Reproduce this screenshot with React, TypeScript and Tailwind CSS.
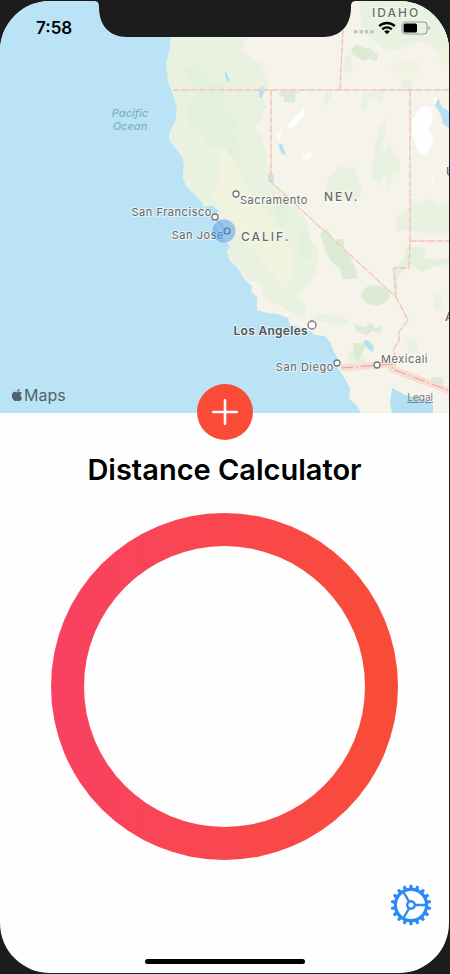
import { FaApple } from "react-icons/fa";

type Label = {
  text: string;
  x: number;
  y: number;
  className: string;
  anchor?: "start" | "middle" | "end";
};

const city = "fill-[#666664] text-[11px] font-normal tracking-wider";
const region = "fill-[#6a6a68] text-[12px] font-medium tracking-[2px]";
const ocean = "fill-[#7fb0c6] text-[11px] font-medium italic tracking-normal";

const labels: Label[] = [
  { text: "Pacific", x: 130, y: 117, className: ocean, anchor: "middle" },
  { text: "Ocean", x: 130, y: 130, className: ocean, anchor: "middle" },
  { text: "IDAHO", x: 372, y: 17, className: region },
  { text: "NEV.", x: 324, y: 201, className: region },
  { text: "CALIF.", x: 241, y: 241, className: region },
  { text: "Sacramento", x: 240, y: 204, className: city },
  { text: "San Francisco", x: 212, y: 216, className: city, anchor: "end" },
  { text: "San Jose", x: 224, y: 239, className: city, anchor: "end" },
  {
    text: "Los Angeles",
    x: 308,
    y: 335,
    className: "fill-[#555553] text-[12px] font-semibold tracking-wide",
    anchor: "end",
  },
  { text: "San Diego", x: 334, y: 371, className: city, anchor: "end" },
  { text: "Mexicali", x: 381, y: 363, className: city },
  { text: "U", x: 446, y: 176, className: region },
  { text: "A", x: 445, y: 321, className: region },
];

const towns = [
  { x: 236, y: 194, r: 3 },
  { x: 215, y: 217, r: 3 },
  { x: 312, y: 325, r: 4 },
  { x: 337, y: 363, r: 3 },
  { x: 377, y: 365, r: 3 },
];

const borders =
  "M173 90H449M343 30L340 90M271 90V182L396 297L394 268H409L410 241V90M410 241H449M396 297L408 320L399 332V341L393 350L398 362";

function MapView() {
  return (
    <section aria-label="Map" className="relative bg-[#bae3f5]">
      <svg viewBox="0 1 449 412" className="block w-full" role="img" aria-label="California and Nevada">
        <path
          fill="#f6f4ea"
          d="M176 0L174 37L169 52L166 64L169 71L168 82L173 89L173 96L177 106L176 120L170 132L169 139L175 148L182 156L184 165L183 178L187 187L195 194L203 203L203 208L209 212L213 217L217 226L222 236L229 242L230 247L227 252L230 261L238 268L245 280L252 286L251 291L257 297L257 310L267 313L278 314L288 318L290 325L300 327L312 332L315 335L325 336L330 342L334 352L337 357L338 368L345 379L350 388L349 398L357 406L361 413L450 413V0Z"
        />
        <g fill="#e9f2e1">
          <path d="M174 0H225V37L246 38L243 50L249 56L261 64L268 78L268 88L262 96L267 107L260 121L255 125L262 138L267 152L265 162L272 170L274 184L284 190L292 203L306 219L311 239L318 251L316 275L306 287L297 295L308 309L303 314L290 312L282 307L272 302L263 296L263 289L257 281L250 281L240 268L230 261L227 252L230 247L222 236L213 217L203 208L203 203L187 187L183 178L184 165L182 156L169 139L170 132L176 120L177 106L168 82L166 64L169 52Z" />
          <path d="M359 0H449V60L441 58L432 45L418 41L400 49L388 52L374 42L362 29Z" />
          <path d="M345 57L351 53L353 70L347 74L343 69ZM401 79H412V90H402ZM326 92H334L329 100L325 108L323 102ZM363 94L372 90H386L381 101L369 98L366 110L361 108Z" />
          <path d="M328 177L336 171L342 164L345 170L349 168L354 166L359 181L363 191L355 204L350 196L344 202L338 192L332 203L325 190ZM374 150L380 125L386 118L386 132L382 145L384 150L390 142L394 155L400 161L399 177L394 172L388 190L385 175L379 186L371 177Z" />
          <path d="M396 218L407 210L412 199L420 206L430 199L440 205L449 201V233H419L408 230L396 232ZM290 313L303 312L308 319L319 313L342 317L350 320L348 325L333 324L312 320ZM433 293L441 294L443 309L435 311ZM406 339L416 341L418 353L408 354Z" />
          <path d="M346 353L356 350L368 363L350 365Z" />
        </g>
        <g fill="#e2f0dc">
          <path d="M184 71L196 64L202 69L211 83L224 84V108L237 118L232 134L245 153L234 160L222 145L208 147L201 131L189 126L186 105L197 99L193 82Z" />
          <path d="M274 206L287 203L290 216L282 226L275 220ZM298 232L307 230L312 250L309 260L300 257Z" />
          <path d="M392 267L399 265L406 255L404 248L416 247L425 249V258L439 260L449 257V264L435 266L422 272L409 263L398 277V291L394 295Z" />
        </g>
        <g fill="#dcebd3">
          <path d="M351 49L357 44L364 48L370 48L378 55L377 61L369 59L363 61L352 54ZM279 91H300L295 95V102H284V97L279 95Z" />
          <path d="M320 233L328 229L333 239H344V250L349 255L357 271L357 279H342L340 269L330 260L325 250Z" />
          <path d="M362 291L369 285L382 287L389 290L389 299L379 306L367 304L361 298Z" />
          <path d="M354 324L365 327L371 323L375 328L382 325L380 333L372 331L366 335L356 331ZM353 343H367L362 354L358 363L353 353ZM431 377H443V386H433Z" />
        </g>
        <g fill="#f2f3df">
          <path d="M219 151L224 147L233 161L240 176L250 192L262 207L272 219L280 232L293 251L295 266L287 289L270 271L254 251L238 235L231 223L222 207L212 198L214 188L220 180Z" />
          <path d="M392 63L402 60L421 62L422 72L407 78L391 70ZM431 62L449 47V65ZM442 95L449 99V108L443 106Z" />
        </g>
        <g fill="#fefefe">
          <path d="M304 108L305 115L293 127L288 128L290 122ZM283 130L278 142L277 136ZM303 155L311 152L312 156L307 160L303 158ZM412 120L422 106L431 107L433 121L428 130L434 139L427 155L419 154L412 134ZM433 98H439L435 105ZM431 180L434 179L432 187Z" />
        </g>
        <g fill="#b5dff3">
          <path d="M435 105L438 98L442 107L449 111V128L443 124L441 115ZM259 89L263 86L264 92L262 98L259 97ZM278 145L282 144L286 155L282 154ZM268 175L273 174L274 181L269 183ZM225 71L230 80L228 82L225 77ZM363 341L367 340L374 346L373 352L368 349Z" />
          <path d="M392 413L390 403L392 388L398 391L405 395L415 397L425 400L433 405V413ZM203 207L212 206L219 211L216 214L222 225L228 230L225 232L216 222L213 215Z" />
        </g>
        <path d={borders} fill="none" stroke="#f6dad2" strokeWidth="1.4" />
        <path d={borders} fill="none" stroke="#f0bdb6" strokeWidth="1" strokeDasharray="6 3" />
        <path d="M341 368L393 364L392 369L450 391" fill="none" stroke="#f7ddd4" strokeWidth="7" />
        <path d="M341 368L393 364L392 369L450 391" fill="none" stroke="#e5a198" strokeWidth="1" strokeDasharray="12 3 2 3" />
        <g fill="#fff" stroke="#777" strokeWidth="1.3">
          {towns.map((t) => (
            <circle key={t.x} cx={t.x} cy={t.y} r={t.r} />
          ))}
        </g>
        <g className="font-['Inter',sans-serif]" stroke="#fff" strokeOpacity="0.6" strokeWidth="2" paintOrder="stroke" strokeLinejoin="round">
          {labels.map((l) => (
            <text
              key={l.text}
              x={l.x}
              y={l.y}
              textAnchor={l.anchor ?? "start"}
              className={l.className}
              stroke={l.className === ocean ? "none" : undefined}
            >
              {l.text}
            </text>
          ))}
        </g>
        <circle cx="224" cy="231" r="11.5" fill="#4a98f0" fillOpacity="0.5" />
        <circle cx="227" cy="231" r="3" fill="none" stroke="#5279a5" strokeWidth="1.2" />
      </svg>
      <div className="absolute inset-x-0 bottom-0 flex items-end justify-between pr-4 pb-2 pl-2.5">
        <span className="flex items-center text-base leading-5 text-[#50636c]">
          <FaApple className="size-3.5" aria-hidden="true" />
          Maps
        </span>
        <a href="#legal" className="text-[10px] leading-4 text-[#727f82] underline">
          Legal
        </a>
      </div>
    </section>
  );
}

function StatusBar() {
  return (
    <header className="absolute inset-x-0 top-0 z-10 flex h-9 items-start justify-between pr-[18px] pl-9">
      <time className="pt-[15px] text-[17px] leading-6 font-semibold">7:58</time>
      <svg viewBox="0 0 262 36" className="absolute top-0 left-1/2 h-9 w-[262px] -translate-x-1/2" aria-hidden="true">
        <path fill="#1c1c1c" d="M0 0C4 0 5 2 5 6C5 24 15 36 33 36H229C247 36 257 24 257 6C257 2 258 0 262 0Z" />
      </svg>
      <div className="flex items-center gap-1 pt-5">
        <svg viewBox="0 0 20 14" className="h-3.5 w-5" fill="#c2c5ba" aria-label="No signal">
          <rect x="0" y="9" width="3.6" height="3.6" rx="1" />
          <rect x="5.4" y="9" width="3.6" height="3.6" rx="1" />
          <rect x="10.8" y="9" width="3.6" height="3.6" rx="1" />
          <rect x="16.2" y="9" width="3.6" height="3.6" rx="1" />
        </svg>
        <svg viewBox="0 0 18 14" className="h-3.5 w-[18px]" aria-label="Wi-Fi">
          <g fill="none" stroke="#000" strokeWidth="2.4">
            <path d="M1.2 5.2C5.5 .9 12.5 .9 16.8 5.2" />
            <path d="M4.2 8.3C6.9 5.7 11.1 5.7 13.8 8.3" />
          </g>
          <path d="M6.2 10.4C7.8 9 10.2 9 11.8 10.4L9 13.3Z" />
        </svg>
        <svg viewBox="0 0 30 14" className="ml-px h-3.5 w-[30px]" aria-label="Battery">
          <rect x="1" y="1" width="25" height="12" rx="3.5" fill="none" stroke="#9a9b94" strokeWidth="1.1" />
          <rect x="2.6" y="2.5" width="13.4" height="9" rx="1.5" />
          <path d="M27.5 5C29.3 5.6 29.3 8.4 27.5 9Z" fill="#8b8c86" />
        </svg>
      </div>
    </header>
  );
}

function GearIcon() {
  const teeth = Array.from({ length: 18 }, (_, i) => i * 20 + 10);
  return (
    <svg viewBox="-21 -21 42 42" className="size-[42px]" fill="none" stroke="#2b8af3" aria-hidden="true">
      <circle r="15.6" strokeWidth="3.2" />
      <circle r="3.8" strokeWidth="2.4" />
      <path strokeWidth="2.4" d="M4 0H15M-2 -3.5L-7.5 -13M-2 3.5L-7.5 13" />
      {teeth.map((a) => (
        <path key={a} d="M16.5 -2L20.2 -1.2V1.2L16.5 2Z" fill="#2b8af3" stroke="none" transform={`rotate(${a})`} />
      ))}
    </svg>
  );
}

export default function App() {
  return (
    <div className="min-h-screen bg-[#1c1c1c] pt-px pr-px pb-px font-['Inter','Liberation_Sans',sans-serif] text-black">
      <div className="relative flex min-h-[calc(100vh-2px)] flex-col overflow-hidden rounded-[50px] bg-[#fefefe]">
        <StatusBar />
        <MapView />
        <main className="flex grow flex-col items-center">
          <button
            type="button"
            aria-label="Add location"
            className="relative -mt-[29px] flex size-14 items-center justify-center rounded-full bg-[#fa4b37]"
          >
            <svg viewBox="0 0 26 26" className="size-[26px]" stroke="#fff" strokeWidth="2.6" strokeLinecap="round" aria-hidden="true">
              <path d="M13 1.3V24.7M1.3 13H24.7" />
            </svg>
          </button>
          <h1 className="mt-3 text-[29px] leading-9 font-semibold">Distance Calculator</h1>
          <div className="mt-[25px] size-[347px] rounded-full bg-linear-to-r from-[#f94162] to-[#f84c34] p-[33px]">
            <div className="size-full rounded-full bg-[#fefefe]" />
          </div>
          <button type="button" aria-label="Settings" className="mt-auto mr-[17px] self-end">
            <GearIcon />
          </button>
          <div className="mt-[33px] mb-[9px] h-[5px] w-40 rounded-full bg-black" />
        </main>
      </div>
    </div>
  );
}
